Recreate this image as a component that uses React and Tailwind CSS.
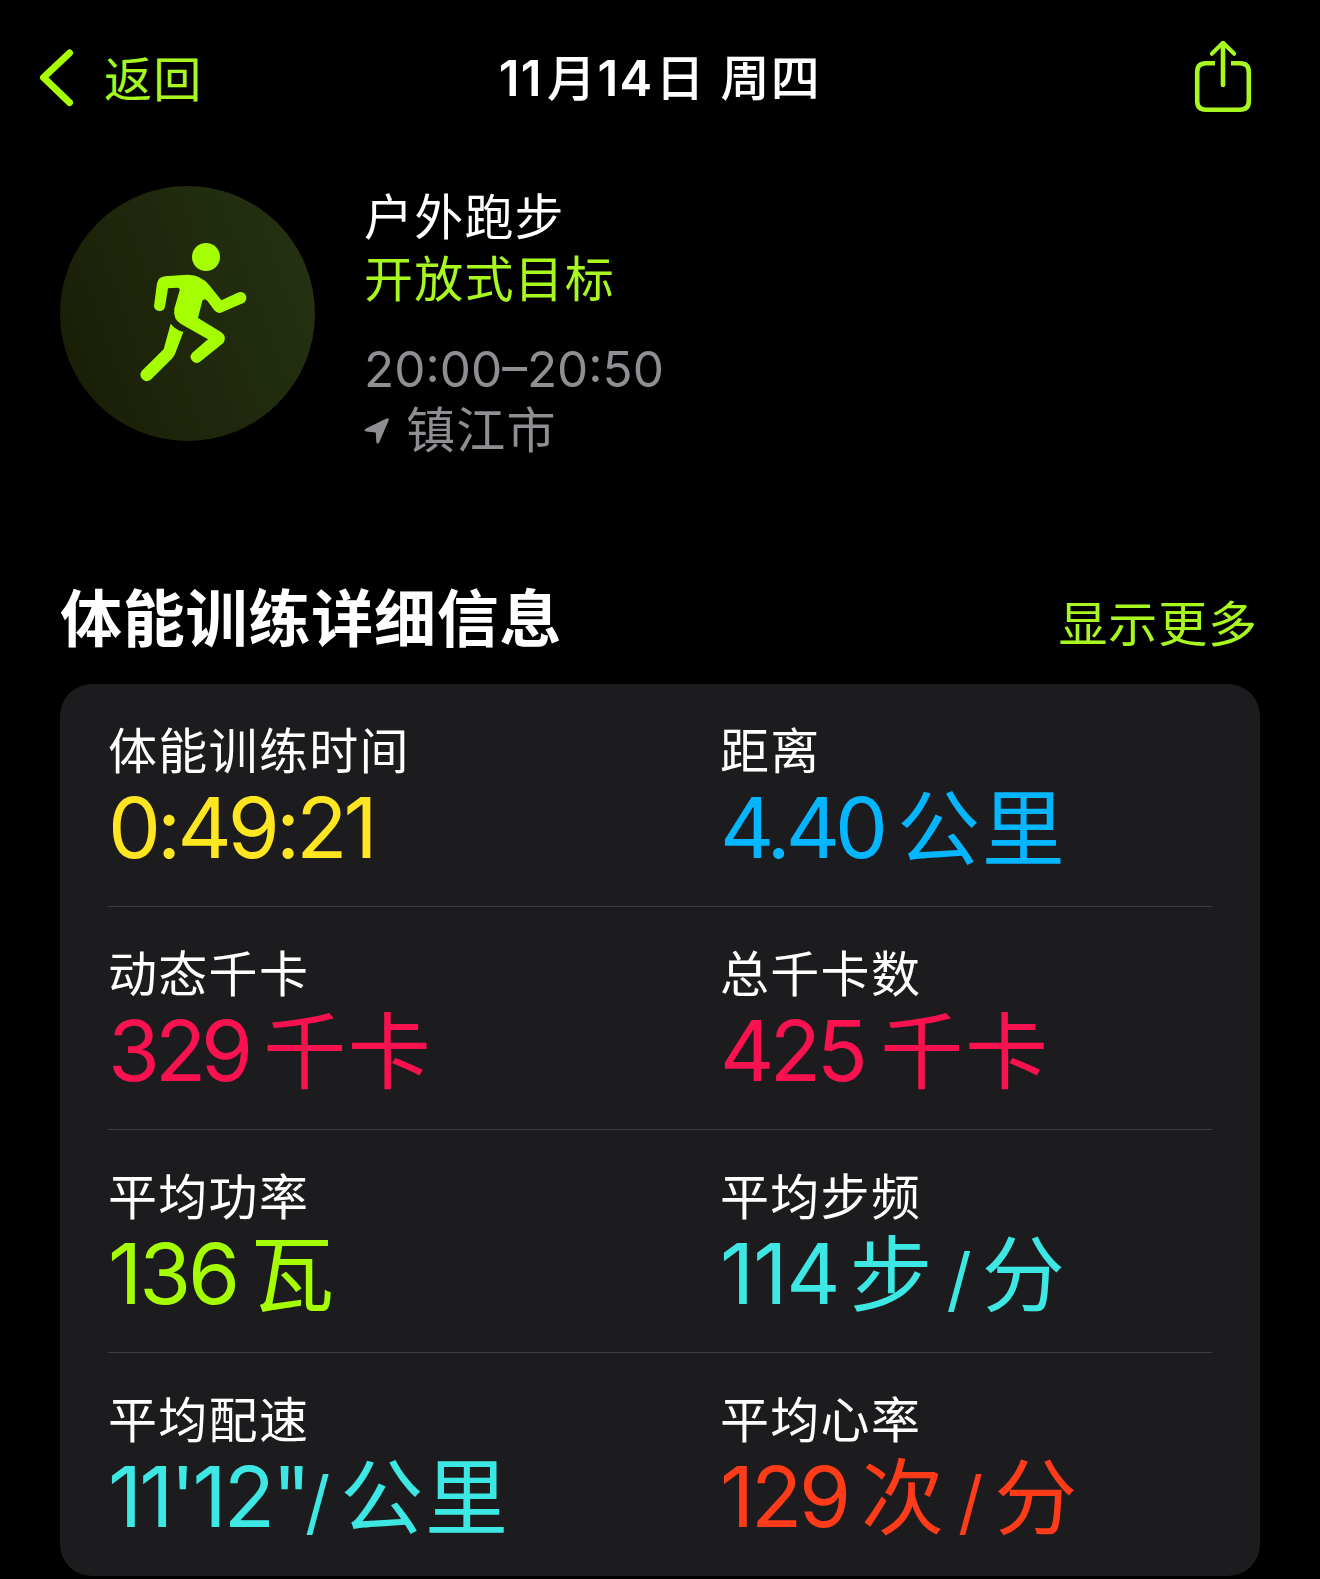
import React from "react";

const workoutStats = [
  {
    label: "体能训练时间",
    color: "text-[#ffe620]",
    parts: [{ text: "0:49:21", style: "tracking-[-3.9px]" }],
  },
  {
    label: "距离",
    color: "text-[#04b5ff]",
    parts: [
      { text: "4.40", style: "tracking-[-5px]" },
      { text: "公里", style: "ml-[14px] translate-y-[1px] text-[83px] tracking-[1.8px]" },
    ],
  },
  {
    label: "动态千卡",
    color: "text-[#fa1150]",
    parts: [
      { text: "329", style: "tracking-[-5px]" },
      { text: "千卡", style: "ml-[15px] translate-y-[1px] text-[83px] tracking-[1.6px]" },
    ],
  },
  {
    label: "总千卡数",
    color: "text-[#fa1150]",
    parts: [
      { text: "425", style: "tracking-[-4.4px]" },
      { text: "千卡", style: "ml-[17px] translate-y-[1px] text-[83px] tracking-[1.6px]" },
    ],
  },
  {
    label: "平均功率",
    color: "text-[#a6ff00]",
    parts: [
      { text: "136", style: "tracking-[-3px]" },
      { text: "瓦", style: "ml-[13px] translate-y-[1px]" },
    ],
  },
  {
    label: "平均步频",
    color: "text-[#3de8e4]",
    parts: [
      { text: "114", style: "tracking-[-1px]" },
      { text: "步", style: "ml-[10px] translate-y-[1px] text-[83px]" },
      { text: "/", style: "ml-[14px] text-[70px]" },
      { text: "分", style: "ml-[10px] translate-y-[1px] text-[83px]" },
    ],
  },
  {
    label: "平均配速",
    color: "text-[#3de8e4]",
    parts: [
      { text: "11'12\"", style: "tracking-[-3px]" },
      { text: "/", style: "ml-[-3px] text-[70px]" },
      { text: "公里", style: "ml-[10px] translate-y-[1px] text-[83px] tracking-[1.6px]" },
    ],
  },
  {
    label: "平均心率",
    color: "text-[#ff3b1a]",
    parts: [
      { text: "129", style: "tracking-[-3.2px]" },
      { text: "次", style: "ml-[13px] translate-y-[1px] text-[83px]" },
      { text: "/", style: "ml-[14px] text-[70px]" },
      { text: "分", style: "ml-[11px] translate-y-[1px] text-[83px]" },
    ],
  },
];

const BackIcon = () => (
  <svg className="h-[60px] w-[36px]" viewBox="0 0 36 60" fill="none">
    <path
      d="M31.5 5 L5.5 29.5 L31.5 54.5"
      stroke="#a6ff00"
      strokeWidth="7"
      strokeLinecap="round"
      strokeLinejoin="round"
    />
  </svg>
);

const ShareIcon = () => (
  <svg className="h-[74px] w-[60px]" viewBox="0 0 60 74" fill="none" stroke="#a8f820" strokeWidth="4.6">
    <path d="M22 24.3 H13 Q4.2 24.3 4.2 33 V62 Q4.2 70.7 13 70.7 H47 Q55.8 70.7 55.8 62 V33 Q55.8 24.3 47 24.3 H38" />
    <path d="M30 4.5 V46" strokeLinecap="round" />
    <path d="M18.8 14.8 L30 3.8 L41.2 14.8" strokeWidth="4" strokeLinecap="round" strokeLinejoin="round" />
  </svg>
);

const RunnerIcon = () => (
  <svg className="size-full" viewBox="30 33 765 765" fill="#a6ff00">
    <circle cx="468" cy="246" r="42" />
    <path d="M345 304 L412 299 Q452 298 478 331 L514 376 L563 353 A17.5 17.5 0 0 1 580 384 L516 412 Q503 418 493 406 L473 379 Q465 367 457 377 L444 429 L514 472 Q532 486 520 504 L449 561 A18 18 0 0 1 427 533 L474 493 L393 447 Q368 431 373 401 L389 346 Q390 337 381 338 L354 340 L345 396 A17 17 0 0 1 312 393 L321 325 Q325 306 345 304 Z" />
    <path d="M362 446 Q376 464 400 471 L375 537 Q371 546 364 553 L302 614 A19 19 0 0 1 275 588 L341 523 Z" />
  </svg>
);

const LocationIcon = () => (
  <svg className="h-[28px] w-[26px]" viewBox="0 0 26 28" fill="#8e8e93">
    <path d="M22.5 1.5 Q25.5 0.5 24.5 3.8 L15.2 25.5 Q13.3 28 12.3 25 L11.8 15.6 L2 14.4 Q-0.8 13.5 2 11.6 Z" />
  </svg>
);

const Stat = ({ label, color, parts }) => (
  <div>
    <div className="text-[49px] leading-[62px] tracking-[1.3px] text-white">{label}</div>
    <div className={`flex items-baseline text-[84px] leading-[89px] ${color}`}>
      {parts.map((part, index) => (
        <span key={index} className={`leading-[89px] ${part.style}`}>
          {part.text}
        </span>
      ))}
    </div>
  </div>
);

const App = () => {
  const rows = [0, 2, 4, 6].map((start) => workoutStats.slice(start, start + 2));

  return (
    <div
      lang="zh-CN"
      className="h-[1579px] w-[1320px] overflow-hidden whitespace-nowrap bg-black font-['Inter','Noto_Sans_CJK_SC',sans-serif] text-[49px]"
    >
      <header className="grid h-[156px] grid-cols-[1fr_auto_1fr] items-center pl-[38px] pr-[67px]">
        <button className="flex items-center gap-[30px] text-[#a8f820]">
          <BackIcon />
          <span className="pt-[3px] text-[48px] leading-[60px] tracking-[1.2px]">返回</span>
        </button>
        <h1 className="ml-[29px] pt-[2px] text-[49px] font-medium leading-[60px] tracking-[1.4px] text-white">
          <span className="mr-[4px] font-semibold">11</span>月
          <span className="mr-[2px] font-semibold">14</span>日 周四
        </h1>
        <button className="justify-self-end pb-[4px]">
          <ShareIcon />
        </button>
      </header>

      <section className="mt-[30px] flex px-[60px]">
        <div className="size-[255px] rounded-full bg-linear-[70deg,#181d04,#263314]">
          <RunnerIcon />
        </div>
        <div className="ml-[49px] mt-[1px] leading-[62px] tracking-[1.2px]">
          <div className="text-white">户外跑步</div>
          <div className="text-[#a8f820]">开放式目标</div>
          <div className="mt-[27px] text-[49.5px] tracking-[0px] text-[#8e8e93]">20:00–20:50</div>
          <div className="flex items-center text-[#8e8e93]">
            <LocationIcon />
            <span className="ml-[16px]">镇江市</span>
          </div>
        </div>
      </section>

      <section className="mt-[118px] px-[60px]">
        <div className="flex h-[104px] items-baseline justify-between">
          <h2 className="text-[62px] font-bold leading-[80px] tracking-[0.8px] text-white">体能训练详细信息</h2>
          <button className="pr-[2px] tracking-[0.9px] text-[#a8f820]">显示更多</button>
        </div>
        <div className="h-[892px] rounded-[32px] bg-[#1c1c1e] px-[48px]">
          {rows.map((row, index) => (
            <div
              key={index}
              className="grid h-[223px] grid-cols-[612px_1fr] border-b border-[#3d3d40] pt-[37px] last:border-b-0"
            >
              {row.map((stat) => (
                <Stat key={stat.label} {...stat} />
              ))}
            </div>
          ))}
        </div>
      </section>
    </div>
  );
};

export default App;
